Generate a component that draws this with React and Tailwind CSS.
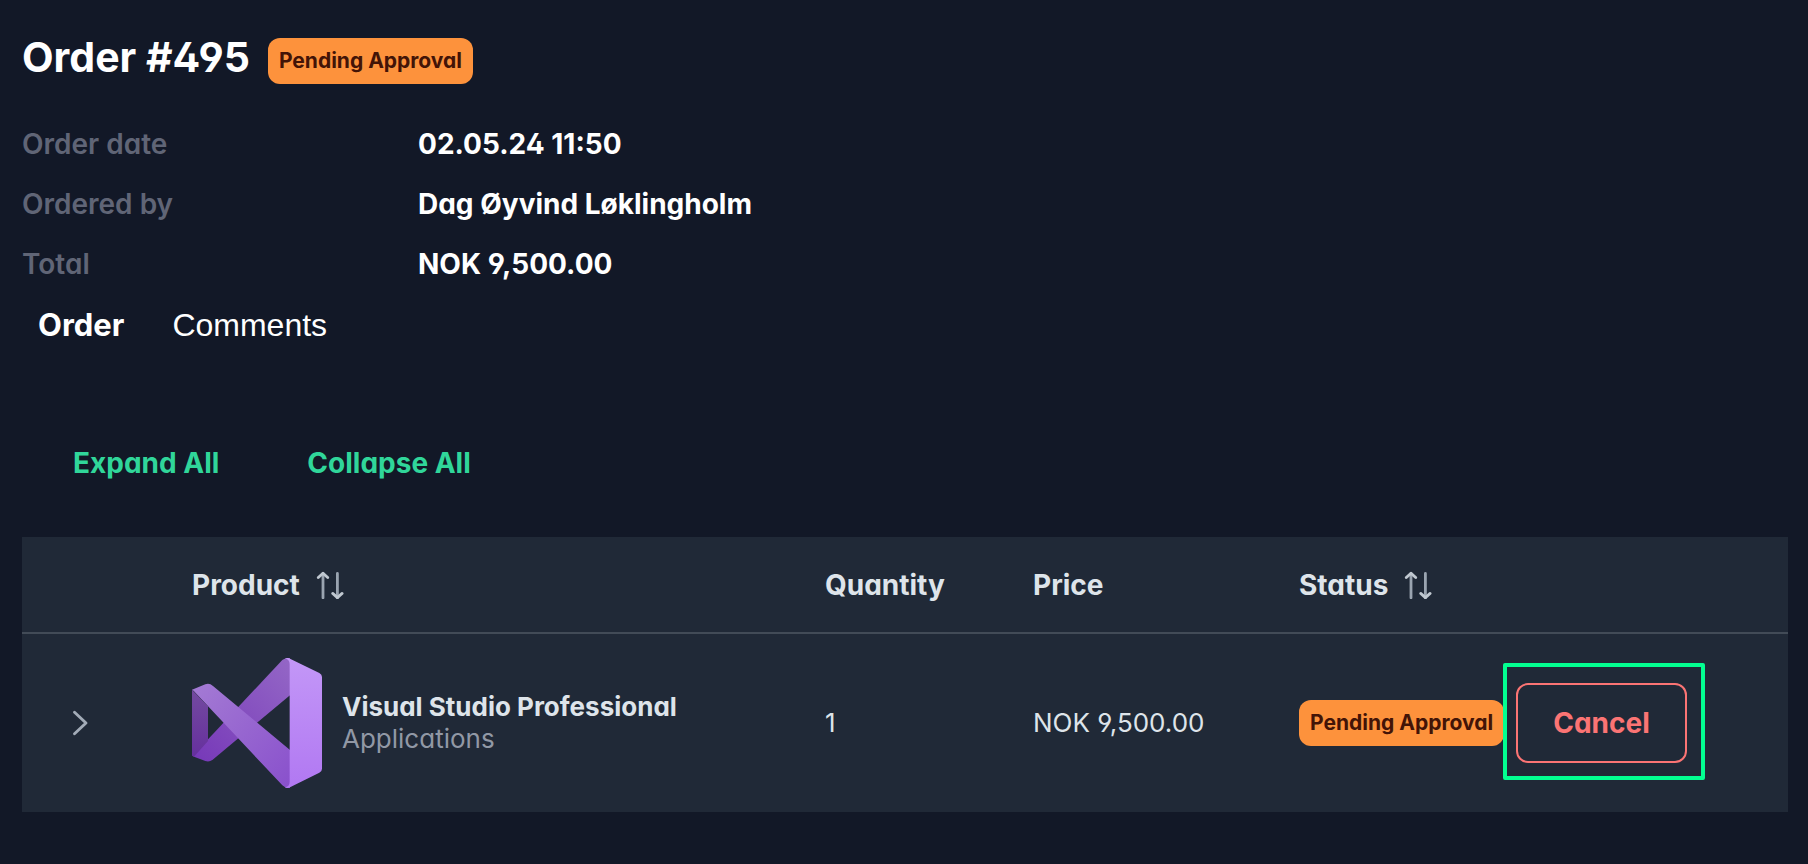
function StatusBadge({ children }) {
  return (
    <span className="inline-flex h-[46px] items-center whitespace-nowrap rounded-xl bg-[#fd923c] px-[11px] text-[21px] leading-8 font-bold text-[#431407]">
      {children}
    </span>
  );
}

function SortIcon() {
  return (
    <svg className="h-7 w-7 shrink-0" viewBox="0 0 28 28" fill="none" strokeWidth="2.8" strokeLinecap="round" strokeLinejoin="round" aria-hidden="true">
      <path d="M7 2.4v24.4M21.4 2.4v24.4" stroke="#9aa4b0" />
      <path d="M2.3 6.6 7 2.2 11.7 6.6M16.7 22.4l4.7 4.2 4.7-4.2" stroke="#c0c8d0" />
    </svg>
  );
}

function ChevronIcon() {
  return (
    <svg className="h-7 w-7" viewBox="0 0 28 28" fill="none" aria-hidden="true">
      <path d="M8.5 3.3 20 14 8.5 24.7" stroke="#a2abb7" strokeWidth="2.9" strokeLinecap="round" strokeLinejoin="round" />
    </svg>
  );
}

function VisualStudioLogo() {
  return (
    <svg className="h-[130px] w-[130px] shrink-0" viewBox="36 27 390 390" role="img" aria-label="Visual Studio">
      <defs>
        <linearGradient id="side" x1="0" y1="0" x2="0" y2="1">
          <stop offset="0" stopColor="#734a9f" />
          <stop offset="1" stopColor="#66309e" />
        </linearGradient>
        <linearGradient id="back" x1="1" y1="0" x2="0" y2="1">
          <stop offset="0" stopColor="#9467c6" />
          <stop offset="1" stopColor="#7638b8" />
        </linearGradient>
        <linearGradient id="front" x1="0" y1="0" x2="1" y2="1">
          <stop offset="0" stopColor="#a47bd4" />
          <stop offset="1" stopColor="#8950cc" />
        </linearGradient>
        <linearGradient id="panel" x1="0" y1="0" x2="0" y2="1">
          <stop offset="0" stopColor="#c397f7" />
          <stop offset="1" stopColor="#b178f2" />
        </linearGradient>
      </defs>
      <path d="M38 320 307 33Q314 27 330 27V139L98 332Q88 340 76 336L42 323Z" fill="url(#back)" />
      <path d="M36 122 76 106Q88 101 99 111L330 303V417Q315 418 307 409L42 127Q39 123 36 124Z" fill="url(#front)" />
      <path d="M36 122 84 172V276L42 323 36 320Z" fill="url(#side)" />
      <path d="M314 27Q321 25 330 29L418 72Q426 76 426 84V359Q426 367 418 371L330 415Q321 419 314 415 329 413 329 398V46Q329 31 314 27Z" fill="url(#panel)" />
    </svg>
  );
}

const details = [
  ["Order date", "02.05.24 11:50"],
  ["Ordered by", "Dag Øyvind Løklingholm"],
  ["Total", "NOK 9,500.00"],
];

export default function App() {
  return (
    <main className="min-h-screen bg-[#121827] pt-8 pr-5 pb-12 pl-[22px] font-['Inter',sans-serif] text-[28px] leading-8 text-white [font-feature-settings:'cv02','cv03','cv04','cv11']">
      <header className="flex items-start gap-[18px]">
        <h1 className="text-[41px] leading-[50px] font-bold">Order #495</h1>
        <div className="flex pt-1.5">
          <StatusBadge>Pending Approval</StatusBadge>
        </div>
      </header>

      <dl className="mt-11 flex flex-col gap-7 font-bold">
        {details.map(([label, value]) => (
          <div key={label} className="flex">
            <dt className="w-[396px] shrink-0 font-semibold text-[#606576]">{label}</dt>
            <dd>{value}</dd>
          </div>
        ))}
      </dl>

      <nav className="mt-[25px] flex gap-12 pl-4" aria-label="Order sections">
        <button type="button" className="h-10 text-[31px] font-bold">Order</button>
        <button type="button" className="h-10 font-['Liberation_Sans',sans-serif] text-[32px]">Comments</button>
      </nav>

      <div className="mt-[94px] flex gap-[88px] pl-[51px] font-bold text-[#30d69a]">
        <button type="button" className="h-12">Expand All</button>
        <button type="button" className="h-12">Collapse All</button>
      </div>

      <table className="mt-[50px] w-full table-fixed border-collapse bg-[#202937] text-left text-[#dee4ea]">
        <colgroup>
          <col className="w-[146px]" />
          <col />
          <col className="w-[208px]" />
          <col className="w-[266px]" />
          <col className="w-[229px]" />
          <col className="w-[284px]" />
        </colgroup>
        <thead>
          <tr className="h-24 border-b-2 border-[#424b57]">
            <td />
            <th scope="col" className="px-6 font-bold">
              <button type="button" className="flex items-center gap-4">Product <SortIcon /></button>
            </th>
            <th scope="col" className="px-6 font-bold">Quantity</th>
            <th scope="col" className="px-6 font-bold">Price</th>
            <th scope="col" className="pl-6 font-bold">
              <button type="button" className="flex items-center gap-4">Status <SortIcon /></button>
            </th>
            <td />
          </tr>
        </thead>
        <tbody className="text-[26px]">
          <tr>
            <td className="pl-11">
              <button type="button" className="block" aria-label="Expand row"><ChevronIcon /></button>
            </td>
            <td className="px-6 py-6">
              <div className="flex items-center gap-5">
                <VisualStudioLogo />
                <div>
                  <div className="font-bold">Visual Studio Professional</div>
                  <div className="text-[#9198a5]">Applications</div>
                </div>
              </div>
            </td>
            <td className="px-6">1</td>
            <td className="px-6">NOK 9,500.00</td>
            <td className="pl-6">
              <div className="flex"><StatusBadge>Pending Approval</StatusBadge></div>
            </td>
            <td className="pl-3">
              <div className="relative w-[171px]">
                <button type="button" className="h-20 w-full rounded-xl border-2 border-[#fb7474] text-[28px] font-bold text-[#fb7474]">Cancel</button>
                <div className="pointer-events-none absolute -top-5 -right-[18px] -bottom-[17px] -left-[13px] rounded-xs border-4 border-[#02ff91]" />
              </div>
            </td>
          </tr>
        </tbody>
      </table>
    </main>
  );
}
